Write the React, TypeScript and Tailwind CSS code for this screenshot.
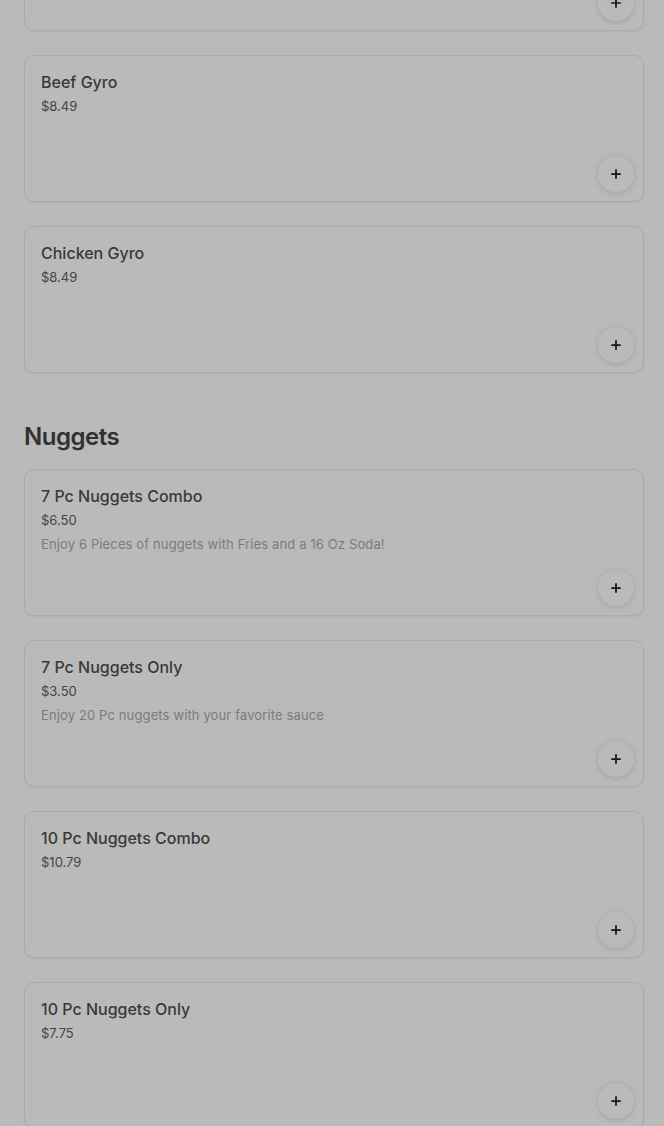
import { Plus } from 'lucide-react';

type Item = { name: string; price: string; description?: string };

const gyros: Item[] = [
  { name: 'Lamb Gyro', price: '$8.99' },
  { name: 'Beef Gyro', price: '$8.49' },
  { name: 'Chicken Gyro', price: '$8.49' },
];

const nuggets: Item[] = [
  { name: '7 Pc Nuggets Combo', price: '$6.50', description: 'Enjoy 6 Pieces of nuggets with Fries and a 16 Oz Soda!' },
  { name: '7 Pc Nuggets Only', price: '$3.50', description: 'Enjoy 20 Pc nuggets with your favorite sauce' },
  { name: '10 Pc Nuggets Combo', price: '$10.79' },
  { name: '10 Pc Nuggets Only', price: '$7.75' },
];

function ItemCard({ item }: { item: Item }) {
  return (
    <div className="flex flex-col h-[147px] rounded-[10px] border border-[#ebebeb] bg-white shadow-[0_1px_2px_rgba(0,0,0,0.06)] pt-[14px] pl-4 pr-[9px] pb-[9px]">
      <div className="pr-6">
        <h3 className="text-[16px] leading-6 font-medium text-[#4f4f4f]">{item.name}</h3>
        <p className="text-[13px] leading-6 text-[#5e5e5e]">{item.price}</p>
        {item.description && <p className="text-[13px] leading-6 tracking-[0.01em] text-[#aaa]">{item.description}</p>}
      </div>
      <button className="mt-auto self-end w-9 h-9 rounded-full bg-white flex items-center justify-center shadow-[0_1px_6px_rgba(0,0,0,0.14)]">
        <Plus size={14} strokeWidth={3} className="text-[#222]" />
      </button>
    </div>
  );
}

export default function App() {
  return (
    <div className="relative h-[1126px] overflow-hidden bg-white" style={{ fontFamily: 'Inter, "Noto Sans", sans-serif' }}>
      <div className="-mt-[116px] pl-6 pr-5">
        <div className="flex flex-col gap-6">
          {gyros.map(item => (
            <ItemCard key={item.name} item={item} />
          ))}
        </div>

        <h2 className="mt-12 mb-4 text-[24px] leading-8 font-semibold tracking-[-0.02em] text-[#444]">Nuggets</h2>
        <div className="flex flex-col gap-6">
          {nuggets.map(item => (
            <ItemCard key={item.name} item={item} />
          ))}
        </div>
      </div>

      <div className="fixed inset-0 bg-black/[0.27]" />
    </div>
  );
}
